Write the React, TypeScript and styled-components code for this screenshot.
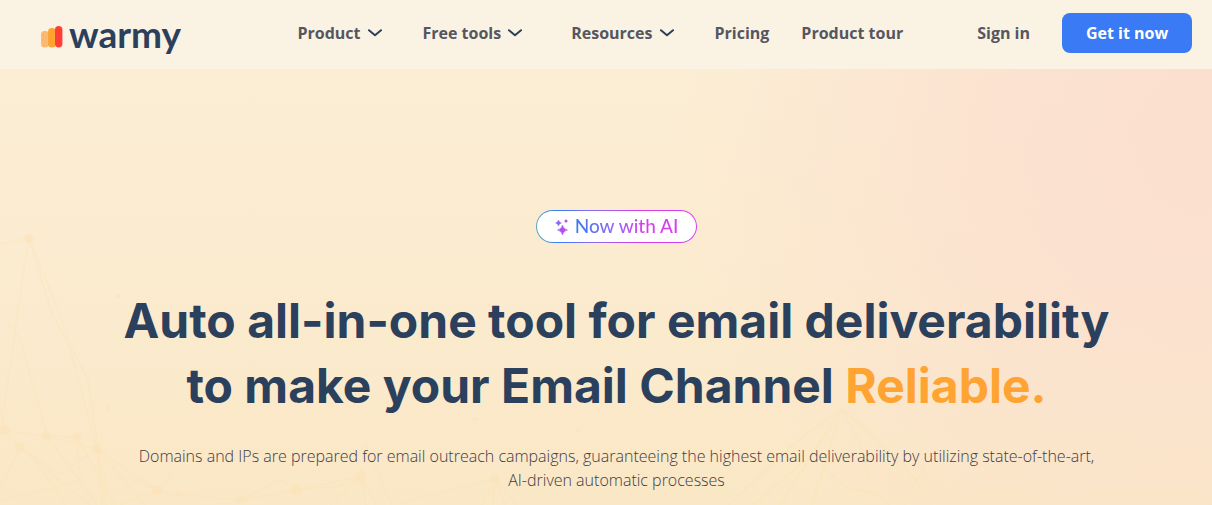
import React from "react";
import styled, { createGlobalStyle } from "styled-components";

const GlobalStyle = createGlobalStyle`
  *, *::before, *::after { box-sizing: border-box; }
  body { margin: 0; background: #faeacb; }
`;

const Header = styled.header`
  display: flex;
  align-items: center;
  height: 69px;
  padding: 0 20px 3px 41px;
  background: #faf3e4;
  font: 700 16px/24px "Open Sans", "Noto Sans", sans-serif;
`;

const Brand = styled.a`
  display: flex;
  align-items: baseline;
  gap: 6px;
  padding-top: 2px;
  color: #2b405c;
  text-decoration: none;
`;

const BrandName = styled.span`
  font: 700 37px/40px Lato, sans-serif;
`;

const Nav = styled.nav`
  display: flex;
  align-items: center;
  gap: 32px;
  margin-left: auto;
`;

const MenuButton = styled.button<{ $room: number }>`
  display: flex;
  align-items: center;
  gap: 6px;
  padding: 0;
  margin-right: ${(p) => p.$room}px;
  border: 0;
  background: none;
  color: #56565f;
  font: inherit;
`;

const NavLink = styled.a`
  color: #56565f;
  text-decoration: none;
`;

const Account = styled.div`
  display: flex;
  align-items: center;
  gap: 32px;
  margin-left: 74px;
`;

const PrimaryButton = styled.button`
  width: 130px;
  height: 40px;
  padding: 0;
  border: 0;
  border-radius: 8px;
  background: #3a7af5;
  color: #fff;
  font: inherit;
`;

const Hero = styled.main`
  position: relative;
  display: flex;
  flex-direction: column;
  align-items: center;
  min-height: calc(100vh - 69px);
  padding: 141px 20px 12px 41px;
  overflow: hidden;
  text-align: center;
  background:
    radial-gradient(ellipse 44% 115% at 100% 15%, #fbdfcf 0%, #fbdfcfc0 40%, #fbdfcf00 100%),
    linear-gradient(#fbeed5, #fbebcf 50%, #fae7c5);
`;

const Network = styled.svg`
  position: absolute;
  inset: 0;
  width: 100%;
  height: 100%;
`;

const Badge = styled.div`
  position: relative;
  display: flex;
  align-items: center;
  justify-content: center;
  gap: 6px;
  width: 161px;
  height: 33px;
  border: 1px solid transparent;
  border-radius: 17px;
  background:
    linear-gradient(#fff, #fff) padding-box,
    linear-gradient(90deg, #5aa5c0, #3a7af5 15%, #8a6cf0 35%, #d93df0 65%) border-box;
`;

const BadgeText = styled.span`
  padding-bottom: 2px;
  font: 500 19px/28px Lato, sans-serif;
  color: transparent;
  background: linear-gradient(90deg, #3a7af5, #8a6cf0 35%, #d93df0 65%);
  background-clip: text;
`;

const Title = styled.h1`
  position: relative;
  margin: 45px 0 0;
  color: #2b405c;
  font: 700 48px/65px Inter, sans-serif;
`;

const Accent = styled.span`
  color: #ffa332;
`;

const Lead = styled.p`
  position: relative;
  margin: 26px 0 0;
  color: #3c3c48;
  font: 300 16px/24px "Open Sans", sans-serif;
`;

const Line = styled.span`
  display: block;
`;

const Chevron = () => (
  <svg width="16" height="8" viewBox="0 0 16 8" fill="none" stroke="#2b405c" strokeWidth="2" strokeLinecap="round" strokeLinejoin="round" aria-hidden="true">
    <path d="M2 1.200 8 6.200l6-5" />
  </svg>
);

const Bars = () => (
  <svg width="22" height="22" viewBox="0 0 22 22" aria-hidden="true">
    <rect x="0" y="5" width="8" height="16.500" rx="3.500" fill="#fbbb76" />
    <g fill="#f79b42">
      <circle cx="2.500" cy="9" r=".6" />
      <circle cx="5" cy="11" r=".6" />
      <circle cx="2.500" cy="14" r=".6" />
      <circle cx="5" cy="16" r=".6" />
      <circle cx="3" cy="19" r=".6" />
    </g>
    <rect x="7" y="2" width="8" height="19.500" rx="3.800" fill="#ffa332" />
    <rect x="14" y="0" width="7.400" height="21.500" rx="3.700" fill="#ff3f35" />
  </svg>
);

const Sparkles = () => (
  <svg width="14" height="16" viewBox="0 0 14 16" aria-hidden="true">
    <defs>
      <linearGradient id="spark" x1="0" x2="14" gradientUnits="userSpaceOnUse">
        <stop offset="0" stopColor="#6a73f2" />
        <stop offset=".5" stopColor="#b14ff0" />
        <stop offset="1" stopColor="#d93df0" />
      </linearGradient>
    </defs>
    <g fill="url(#spark)">
      <path d="M7.500 6q.8 4.200 5 5-4.200.8-5 5-.8-4.200-5-5 4.200-.8 5-5Z" stroke="url(#spark)" strokeWidth=".6" />
      <path d="M3.500 1q.6 2.500 3 3-2.400.6-3 3-.6-2.400-3-3 2.400-.5 3-3Z" stroke="url(#spark)" strokeWidth=".4" />
      <circle cx="11" cy="2" r="1.500" />
    </g>
  </svg>
);

const nodes = [
  [29, 169, 5], [5, 361, 5], [20, 378, 5], [47, 367, 5], [77, 368, 5], [97, 380, 5],
  [157, 421, 5], [178, 425, 3], [240, 431, 4], [297, 421, 6], [361, 407, 6], [495, 410, 5],
  [108, 339, 2], [475, 350, 2], [577, 361, 2], [118, 227, 2],
];

const threads = [
  "M0 175 29 169 18 240 0 370", "M29 169 52 245 88 310 106 436", "M29 169 62 250 112 436",
  "M0 340 5 361 20 378 90 436", "M0 361 47 367 77 368 115 436", "M5 250 20 270 47 367 97 436",
  "M20 378 0 420M20 378 60 405 97 380 145 436", "M47 367 97 380 102 436M77 368 80 412 0 432",
  "M20 378 38 396 66 436", "M130 410 157 421 178 425 240 431 297 421 361 407",
  "M157 421 176 401M157 421 120 436M97 380 157 421", "M361 407 366 436M361 407 376 436M365 375 392 436",
  "M240 431 280 410 297 421 340 417 361 407 330 436", "M400 434 495 410 482 436M495 410 493 436M495 410 505 436M495 410 517 436",
];

const paleThreads = [
  "M728 436 800 370 842 339 780 436", "M842 339 812 385 753 436M842 339 900 390 925 425 930 436",
  "M842 339 862 380 870 415M842 339 812 436M842 339 888 385 920 415", "M820 395 846 418 875 425 890 436M905 436 925 395",
];

const Background = () => (
  <Network viewBox="0 0 1212 436" preserveAspectRatio="xMinYMin slice" aria-hidden="true">
    <g fill="#fde1b4" opacity=".4">
      {nodes.map(([x, y, r]) => (
        <circle key={`${x}-${y}`} cx={x} cy={y} r={r} />
      ))}
    </g>
    <path d={threads.join("")} fill="none" stroke="#fde1b4" strokeWidth="1.500" opacity=".35" />
    <path d={paleThreads.join("")} fill="none" stroke="#fae4ae" strokeWidth="1.500" opacity=".4" />
  </Network>
);

export default function App() {
  return (
    <>
      <GlobalStyle />
      <Header>
        <Brand href="#">
          <Bars />
          <BrandName>warmy</BrandName>
        </Brand>
        <Nav>
          <MenuButton $room={8}>Product <Chevron /></MenuButton>
          <MenuButton $room={16}>Free tools <Chevron /></MenuButton>
          <MenuButton $room={8}>Resources <Chevron /></MenuButton>
          <NavLink href="#">Pricing</NavLink>
          <NavLink href="#">Product tour</NavLink>
        </Nav>
        <Account>
          <NavLink href="#">Sign in</NavLink>
          <PrimaryButton>Get it now</PrimaryButton>
        </Account>
      </Header>
      <Hero>
        <Background />
        <Badge>
          <Sparkles />
          <BadgeText>Now with AI</BadgeText>
        </Badge>
        <Title>
          <Line>Auto all-in-one tool for email deliverability</Line>
          <Line>to make your Email Channel <Accent>Reliable.</Accent></Line>
        </Title>
        <Lead>
          <Line>Domains and IPs are prepared for email outreach campaigns, guaranteeing the highest email deliverability by utilizing state-of-the-art,</Line>
          <Line>AI-driven automatic processes</Line>
        </Lead>
      </Hero>
    </>
  );
}
